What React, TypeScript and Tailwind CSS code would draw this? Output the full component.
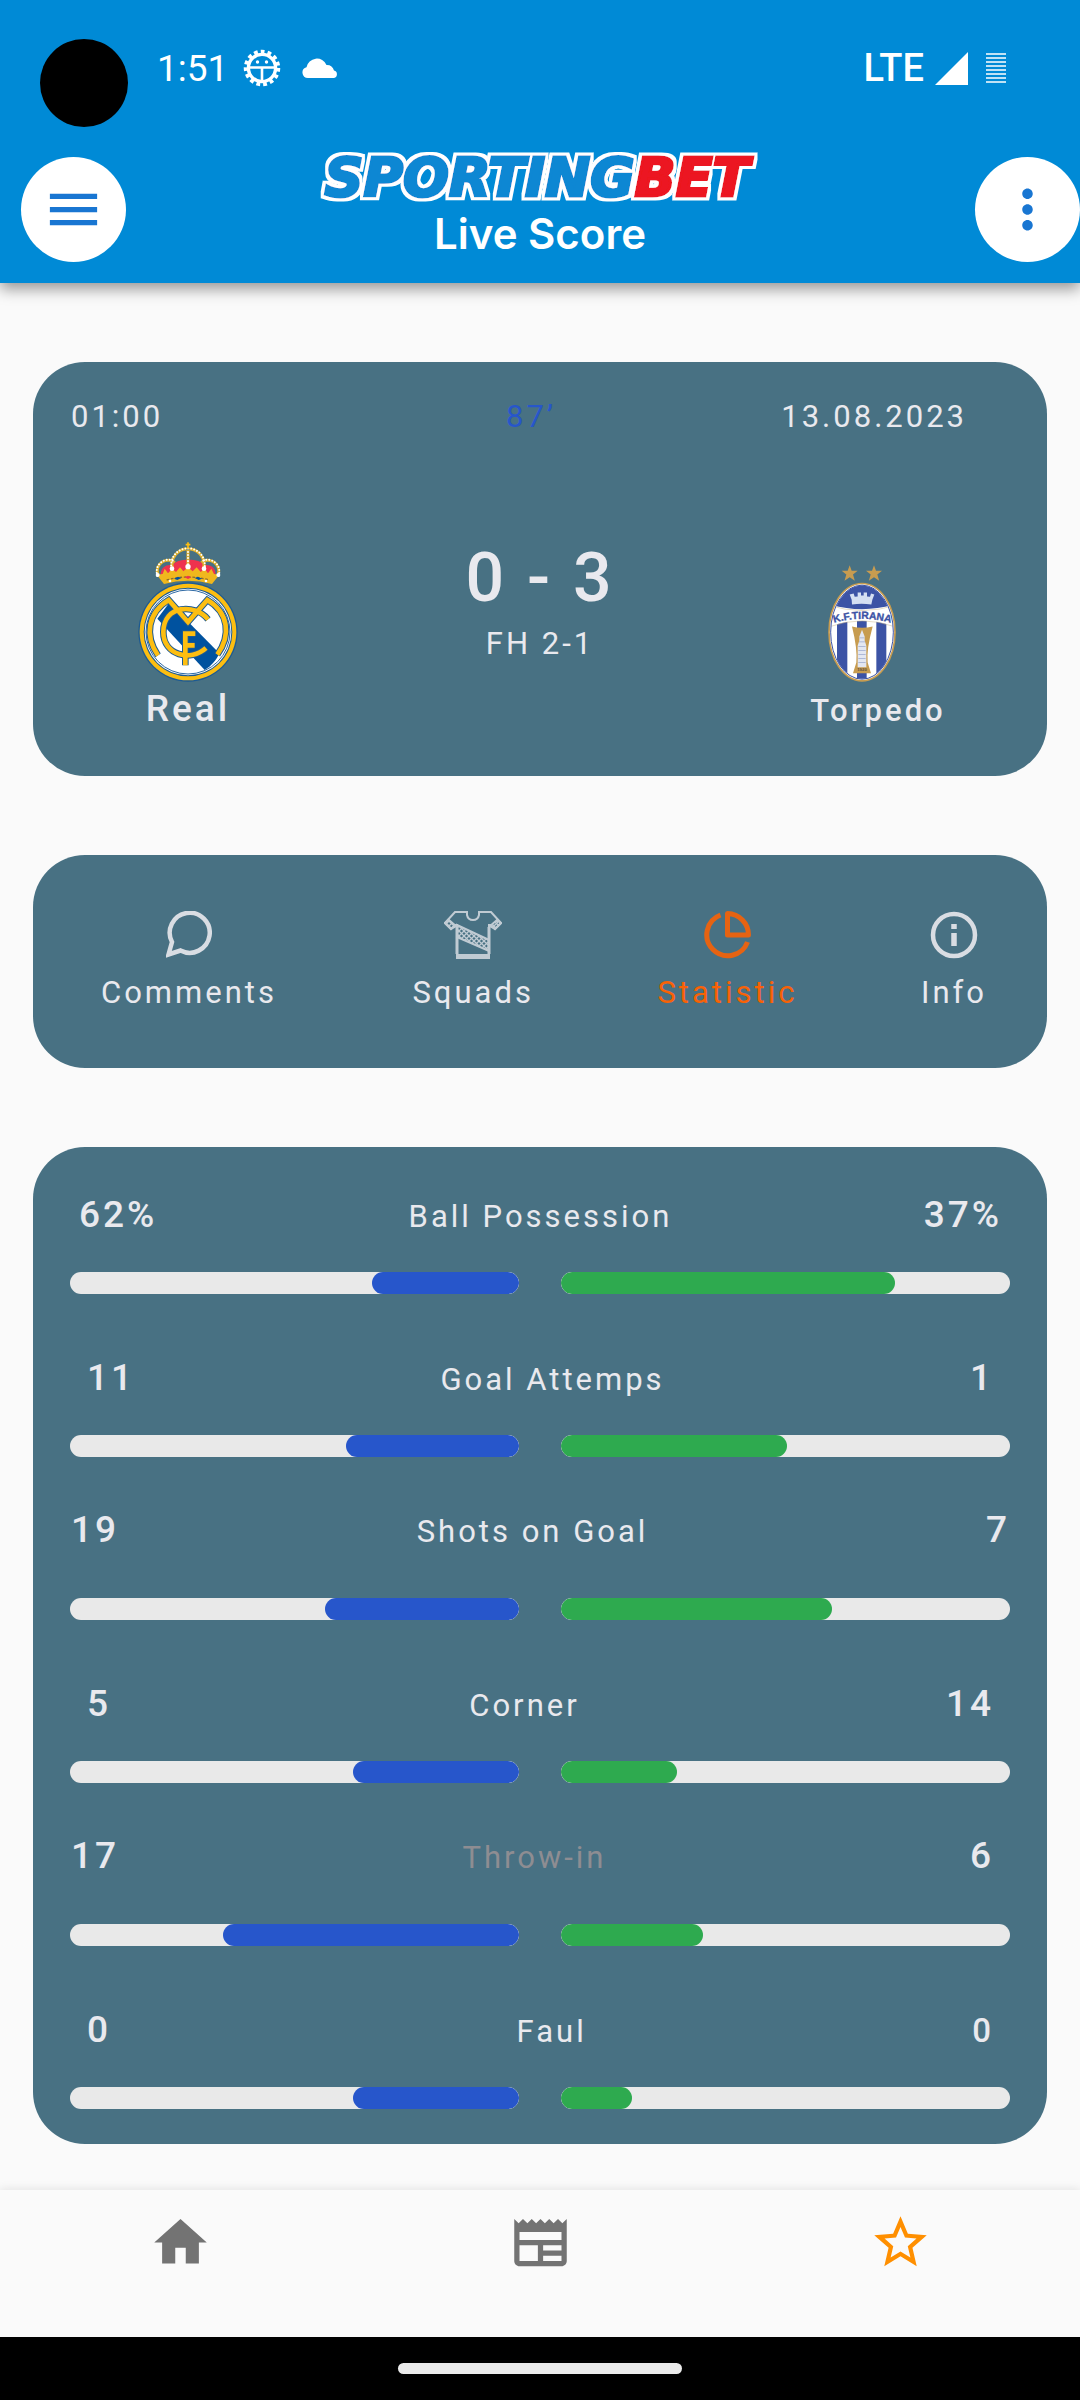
import type { ReactNode } from "react";
import { MdHome, MdMenu, MdMoreVert, MdNewspaper, MdStarOutline } from "react-icons/md";

type Stat = {
  label: string;
  home: string;
  away: string;
  homeFill: number;
  awayFill: number;
  row: string;
  homeClass?: string;
  labelClass?: string;
  awayClass?: string;
};

const NORMAL = "pt-[11px] gap-[33px]";
const RAISED = "gap-[44px]";

const stats: Stat[] = [
  { label: "Ball Possession", home: "62%", away: "37%", homeFill: 32.8, awayFill: 74.3, row: NORMAL, homeClass: "pl-2", awayClass: "pr-2" },
  { label: "Goal Attemps", home: "11", away: "1", homeFill: 38.6, awayFill: 50.4, row: NORMAL, homeClass: "pl-4", awayClass: "pr-4" },
  { label: "Shots on Goal", home: "19", away: "7", homeFill: 43.3, awayFill: 60.3, row: RAISED, labelClass: "pr-10" },
  { label: "Corner", home: "5", away: "14", homeFill: 36.9, awayFill: 25.9, row: NORMAL, homeClass: "pl-4", labelClass: "pr-2", awayClass: "pr-4" },
  { label: "Throw-in", home: "17", away: "6", homeFill: 66, awayFill: 31.7, row: RAISED, labelClass: "pr-5 text-[#8e8d92]", awayClass: "pr-4" },
  { label: "Faul", home: "0", away: "0", homeFill: 36.9, awayFill: 15.8, row: NORMAL, homeClass: "pl-4", labelClass: "pl-5", awayClass: "pr-4 text-[33px]" },
];

function GearFace() {
  return (
    <svg viewBox="0 0 38 38" className="size-[38px]" fill="none" stroke="white" aria-hidden="true">
      <circle cx="19" cy="19" r="16" strokeWidth="4.500" strokeDasharray="3.7 3" />
      <circle cx="19" cy="19" r="13.6" strokeWidth="3.4" />
      <path d="M5 18.500h28M19 18v15" strokeWidth="2.6" />
      <circle cx="14.500" cy="13" r="1.700" fill="white" stroke="none" />
      <circle cx="23.500" cy="13" r="1.700" fill="white" stroke="none" />
    </svg>
  );
}

function Cloud() {
  return (
    <svg viewBox="0 0 36 20" className="h-5 w-9" fill="white" aria-hidden="true">
      <path d="M6 20a5.500 5.500 0 0 1-1.500-10.800A10.500 10.500 0 0 1 24.500 7a7.500 7.500 0 0 1 7.500 5.600A3.800 3.800 0 0 1 32 20z" />
    </svg>
  );
}

function Logo() {
  return (
    <svg viewBox="0 0 460 64" className="h-16 w-[460px]" role="img" aria-label="Sportingbet">
      <defs>
        <filter id="logo-outline" x="-5%" y="-10%" width="110%" height="120%">
          <feMorphology in="SourceAlpha" operator="dilate" radius="2.5" result="grown" />
          <feFlood floodColor="#fff" />
          <feComposite in2="grown" operator="in" result="halo" />
          <feMerge>
            <feMergeNode in="halo" />
            <feMergeNode in="SourceGraphic" />
          </feMerge>
        </filter>
      </defs>
      <text
        x="227"
        y="49"
        textAnchor="middle"
        fontFamily="'DejaVu Sans', sans-serif"
        fontWeight="700"
        fontStyle="italic"
        fontSize="54"
        strokeWidth="3"
        filter="url(#logo-outline)"
      >
        <tspan fill="#0d87d3" stroke="#0d87d3">SPORTING</tspan>
        <tspan fill="#ec1820" stroke="#ec1820">BET</tspan>
      </text>
    </svg>
  );
}

function RealCrest() {
  const monogram = (
    <>
      <path d="M114 372C72 312 84 244 146 206L204 272L262 206C326 244 334 312 292 370" />
      <path d="M264 264C226 216 130 220 130 302C130 372 212 392 258 350" />
      <path d="M196 402V307H226M196 342H224" />
    </>
  );
  return (
    <svg viewBox="54 32 300 420" className="h-[140px] w-[100px]" role="img" aria-label="Real crest">
      <circle cx="204" cy="302" r="149" fill="#1c5a93" />
      <circle cx="204" cy="302" r="145" fill="#fdbe11" />
      <circle cx="204" cy="302" r="133" fill="#1c5a93" />
      <circle cx="204" cy="302" r="130" fill="#fff" />
      <circle cx="204" cy="302" r="126" fill="none" stroke="#2f6aa5" strokeWidth="3" />
      <path d="M112 262L148 214L298 366C288 388 274 404 254 416Z" fill="#00529f" />
      <path d="M144 300L184 352Q160 344 144 300Z" fill="#fff" />
      <path d="M192 248H218L204 262Z" fill="#fff" />
      <g fill="none" stroke="#1c5a93" strokeWidth="20">{monogram}</g>
      <g fill="none" stroke="#fdbe11" strokeWidth="14">{monogram}</g>
      <path d="M122 134C120 106 142 98 158 102C166 80 244 80 252 102C270 98 290 108 286 134Q204 112 122 134Z" fill="#ee324e" />
      <g fill="none" stroke="#e0b02a" strokeWidth="9">
        <path d="M114 134C102 92 146 76 164 94" />
        <path d="M294 134C306 92 262 76 244 94" />
        <path d="M156 112C150 54 204 50 204 54C204 50 258 54 252 112" />
        <path d="M204 56V106" />
      </g>
      <g fill="none" stroke="#fff" strokeWidth="6" strokeDasharray="0.1 9" strokeLinecap="round">
        <path d="M112 134C100 92 146 74 164 92" />
        <path d="M296 134C308 92 262 74 244 92" />
        <path d="M154 112C148 54 204 48 204 52C204 48 260 54 254 112" />
        <path d="M204 62V106" />
      </g>
      <path d="M204 33V52M197 40H211" stroke="#fdbe11" strokeWidth="5" />
      <path d="M110 130L128 128L134 112L144 126L156 112L168 122L180 108L190 120L204 108L218 120L230 108L242 122L254 112L264 126L274 112L282 128L298 130L276 158Q204 138 132 158Z" fill="#f0b71d" />
      <path d="M140 146Q204 128 268 146" fill="none" stroke="#8e6d2b" strokeWidth="4" strokeDasharray="8 5" />
      <path d="M162 142l12-6l10 4l-12 6zM224 140l10-4l12 6l-10 4z" fill="#00529f" />
      <path d="M194 138l10-5l10 5l-10 5z" fill="#ee324e" />
      <g fill="#fff">
        <circle cx="113" cy="131" r="6" />
        <circle cx="156" cy="112" r="7" />
        <circle cx="204" cy="106" r="8" />
        <circle cx="252" cy="112" r="7" />
        <circle cx="295" cy="131" r="6" />
        <circle cx="150" cy="149" r="4" />
        <circle cx="258" cy="149" r="4" />
      </g>
    </svg>
  );
}

function TiranaCrest() {
  return (
    <svg viewBox="82 48 210 350" className="h-[117px] w-[70px]" role="img" aria-label="K.F. Tirana crest">
      <defs>
        <clipPath id="tirana-oval">
          <ellipse cx="187" cy="249" rx="93" ry="140" />
        </clipPath>
        <path id="tirana-arc" d="M100 222Q187 196 276 222" />
      </defs>
      <g fill="#c79c50">
        <path d="M150 48l6 17h18l-14 11l5.500 19l-15.500-11l-15.500 11l5.500-19l-14-11h18z" />
        <path d="M223 48l6 17h18l-14 11l5.500 19l-15.500-11l-15.500 11l5.500-19l-14-11h18z" />
      </g>
      <ellipse cx="187" cy="249" rx="99" ry="146" fill="#fff" stroke="#c79c50" strokeWidth="5" />
      <g clipPath="url(#tirana-oval)">
        <path d="M85 100H290V400H85Z" fill="#fff" />
        <path d="M85 100H290V164Q187 196 85 164Z" fill="#3c53a5" />
        <path d="M112 215H143V400H112ZM172 215H201V400H172ZM230 215H260V400H230Z" fill="#3c53a5" />
        <path d="M85 168Q187 200 290 168V234Q187 196 85 234Z" fill="#fff" stroke="#cdb98e" strokeWidth="1.500" />
      </g>
      <ellipse cx="187" cy="249" rx="94" ry="141" fill="none" stroke="#3c53a5" strokeWidth="3" />
      <path d="M150 136l12-3l3 10l9-1v-12h10v9h8v-9h10v12l9 1l3-10l10 3l-6 16l-3 14q-30-5-58 0l-1-14z" fill="#d5dff2" />
      <path d="M157 232Q187 240 219 232Q200 300 204 340L214 372H160L170 340Q174 300 157 232Z" fill="#c79c50" />
      <path d="M187 242L195 262V274L200 290V354H174V290L179 274V262Z" fill="#e3e7f2" />
      <path d="M180 266h14M178 278h18M176 292h22M176 304h22M176 316h22M176 328h22M176 340h22" stroke="#93a2c9" strokeWidth="2" />
      <text x="187" y="367" textAnchor="middle" fontFamily="'Liberation Sans', sans-serif" fontWeight="700" fontSize="13" fill="#5d5140">1920</text>
      <text fontFamily="'Liberation Sans', sans-serif" fontWeight="700" fontSize="31" fill="#3c53a5" stroke="#3c53a5" strokeWidth="1" textAnchor="middle">
        <textPath href="#tirana-arc" startOffset="50%">K.F.TIRANA</textPath>
      </text>
    </svg>
  );
}

function CommentIcon() {
  return (
    <svg viewBox="0 0 46 48" className="h-12 w-[46px] opacity-90" fill="none" stroke="currentColor" strokeWidth="4.500" aria-hidden="true">
      <path d="M2.500 43.500L6 31A20 20 0 1 1 14.500 39.500Z" />
    </svg>
  );
}

function ShirtIcon() {
  return (
    <svg viewBox="0 0 58 48" className="h-12 w-[58px] opacity-75" fill="none" stroke="currentColor" strokeWidth="2" aria-hidden="true">
      <defs>
        <pattern id="shirt-hatch" width="5" height="5" patternUnits="userSpaceOnUse">
          <path d="M0 5L5 0M0 0L5 5" stroke="currentColor" strokeWidth="1.300" />
        </pattern>
      </defs>
      <path d="M11 1H23V4Q24 9 29 9Q34 9 35 4V1H47L57 12L51 18L47 14H45V47H13V14H11L7 18L1 12Z" />
      <path d="M13 14L45 29V40L13 26Z" fill="url(#shirt-hatch)" />
      <path d="M1 12L5 9L12 15L7 18ZM57 12L53 9L46 15L51 18Z" fill="url(#shirt-hatch)" />
      <path d="M13 16V43M45 16V43" strokeWidth="4" opacity="0.500" />
      <path d="M12 43H46V48H12Z" fill="currentColor" stroke="none" />
    </svg>
  );
}

function PieIcon() {
  return (
    <svg viewBox="0 0 48 48" className="size-12 opacity-90" fill="none" stroke="currentColor" strokeWidth="5" aria-hidden="true">
      <path d="M17.500 4A21 21 0 1 0 44.500 31" />
      <path d="M24.500 2.500V24H45.500A21.500 21.500 0 0 0 24.500 2.500Z" strokeLinejoin="round" />
    </svg>
  );
}

function InfoIcon() {
  return (
    <svg viewBox="0 0 48 48" className="size-12 opacity-90" fill="none" stroke="currentColor" strokeWidth="4.500" aria-hidden="true">
      <circle cx="24" cy="24" r="21" />
      <path d="M24 13V18M24 22V35" strokeWidth="5.500" />
    </svg>
  );
}

function Tab({ icon, label, active = false, className = "" }: { icon: ReactNode; label: string; active?: boolean; className?: string }) {
  return (
    <button
      type="button"
      aria-pressed={active}
      className={`flex flex-col items-center gap-[14px] ${active ? "text-[#f86206]" : "text-[#e9e9ee]"} ${className}`}
    >
      {icon}
      <span className="text-[31px] leading-10 tracking-[3px]">{label}</span>
    </button>
  );
}

function Meter({ label, value, side }: { label: string; value: number; side: "home" | "away" }) {
  const home = side === "home";
  return (
    <div
      role="meter"
      aria-label={label}
      aria-valuenow={value}
      aria-valuemin={0}
      aria-valuemax={100}
      className={`flex h-[22px] flex-1 overflow-hidden rounded-full bg-[#e9e9e9] ${home ? "justify-end" : ""}`}
    >
      <div className={`rounded-full ${home ? "bg-[#2756cb]" : "bg-[#2eaa4f]"}`} style={{ width: `${value}%` }} />
    </div>
  );
}

export default function App() {
  return (
    <div className="flex min-h-screen flex-col bg-[#fafafa] font-[Roboto,sans-serif] text-[#e9e9ee]">
      <header className="relative z-10 bg-[#008ad6] text-white shadow-[0_6px_14px_rgba(0,0,0,0.4)]">
        <div className="absolute top-[39px] left-[40px] size-[88px] rounded-full bg-black" />
        <div className="flex h-[136px] items-center justify-between pr-[74px] pl-[157px]">
          <div className="flex items-center">
            <span className="mr-[15px] pt-0.5 text-[37px] leading-10">1:51</span>
            <GearFace />
            <span className="ml-[21px]">
              <Cloud />
            </span>
          </div>
          <div className="flex items-center">
            <span className="mr-[11px] text-[38px] leading-10 font-medium">LTE</span>
            <svg viewBox="0 0 33 33" className="size-[33px]" fill="white" aria-hidden="true">
              <path d="M0 33L33 0V33Z" />
            </svg>
            <svg viewBox="0 0 20 30" className="ml-[18px] h-[30px] w-5" stroke="white" strokeWidth="1.500" aria-hidden="true">
              <path d="M0 1H20M0 5H20M0 9H20M0 13H20M0 17H20M0 21H20M0 25H20M0 29H20" />
            </svg>
          </div>
        </div>
        <div className="flex h-[147px] items-center pl-[21px]">
          <button type="button" aria-label="Menu" className="flex size-[105px] items-center justify-center rounded-full bg-white text-[#1976d2]">
            <MdMenu size={63} />
          </button>
          <div className="flex flex-1 flex-col items-center pr-[21px] pb-4">
            <Logo />
            <h1 className="font-[Inter,sans-serif] text-[42px] leading-[46px] font-semibold">Live Score</h1>
          </div>
          <button type="button" aria-label="More options" className="flex size-[105px] items-center justify-center rounded-full bg-white text-[#1976d2]">
            <MdMoreVert size={63} />
          </button>
        </div>
      </header>

      <main className="flex flex-1 flex-col gap-[79px] px-[33px] pt-[79px] pb-[46px]">
        <section aria-label="Match" className="rounded-[52px] bg-[#487183] pt-[35px] pb-[43px]">
          <div className="grid grid-cols-[1fr_auto_1fr] pr-[56px] pl-[38px] text-[31px] leading-10 tracking-[3px]">
            <span>01:00</span>
            <span className="text-[#2756cb]">87’</span>
            <span className="pr-6 text-right">13.08.2023</span>
          </div>
          <div className="grid grid-cols-3 items-end pt-[101px]">
            <div className="flex flex-col items-center gap-[3px] pt-1 pr-7">
              <RealCrest />
              <p className="text-[37px] leading-12 font-medium tracking-[3px]">Real</p>
            </div>
            <div className="flex flex-col items-center self-start">
              <p className="text-[68px] leading-20 font-medium tracking-[3px]">0 - 3</p>
              <p className="pt-[6px] text-[31px] leading-10 tracking-[3px]">FH 2-1</p>
            </div>
            <div className="flex flex-col items-center gap-[7px]">
              <div className="pr-8">
                <TiranaCrest />
              </div>
              <p className="text-[31px] leading-11 font-medium tracking-[3px]">Torpedo</p>
            </div>
          </div>
        </section>

        <nav aria-label="Match sections" className="flex justify-between rounded-[52px] bg-[#487183] pt-[56px] pr-[60px] pb-[55px] pl-[68px]">
          <Tab icon={<CommentIcon />} label="Comments" />
          <Tab icon={<ShirtIcon />} label="Squads" className="ml-3" />
          <Tab icon={<PieIcon />} label="Statistic" active />
          <Tab icon={<InfoIcon />} label="Info" />
        </nav>

        <section aria-label="Statistic" className="flex flex-col gap-[49px] rounded-[52px] bg-[#487183] px-[37px] pt-[33px] pb-[35px]">
          {stats.map((s) => (
            <div key={s.label} className={`flex flex-col ${s.row}`}>
              <div className="flex h-12 items-baseline pl-px text-[37px] leading-12 font-medium tracking-[3px]">
                <span className={s.homeClass ?? ""}>{s.home}</span>
                <span className={`flex-1 text-center text-[31px] font-normal ${s.labelClass ?? ""}`}>{s.label}</span>
                <span className={s.awayClass ?? ""}>{s.away}</span>
              </div>
              <div className="flex gap-[42px]">
                <Meter label={`${s.label}, Real`} value={s.homeFill} side="home" />
                <Meter label={`${s.label}, Torpedo`} value={s.awayFill} side="away" />
              </div>
            </div>
          ))}
        </section>
      </main>

      <nav aria-label="Main" className="grid h-[147px] grid-cols-3 items-start justify-items-center pt-[21px] text-[#737373] shadow-[0_-2px_8px_rgba(0,0,0,0.08)]">
        <button type="button" aria-label="Home">
          <MdHome size={63} />
        </button>
        <button type="button" aria-label="News">
          <MdNewspaper size={63} />
        </button>
        <button type="button" aria-label="Favourites" className="text-[#ff8f00]">
          <MdStarOutline size={63} />
        </button>
      </nav>
      <div className="flex h-[63px] items-center justify-center bg-black">
        <div className="h-[11px] w-[284px] rounded-full bg-[#ebebeb]" />
      </div>
    </div>
  );
}
